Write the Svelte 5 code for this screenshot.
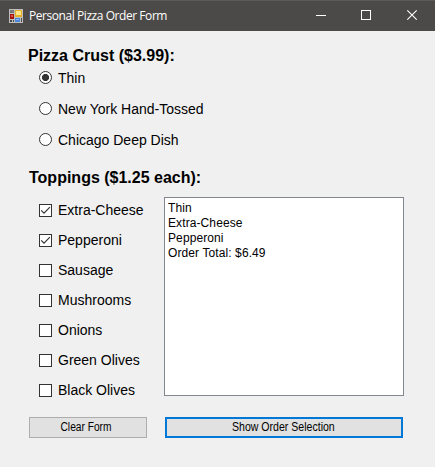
<script>
  const crusts = ['Thin', 'New York Hand-Tossed', 'Chicago Deep Dish'];
  const toppings = ['Extra-Cheese', 'Pepperoni', 'Sausage', 'Mushrooms', 'Onions', 'Green Olives', 'Black Olives'];
  let crust = $state('Thin');
  let chosen = $state(['Extra-Cheese', 'Pepperoni']);
  let lines = $state(['Thin', 'Extra-Cheese', 'Pepperoni', 'Order Total: $6.49']);

  function toggle(name) {
    chosen = chosen.includes(name) ? chosen.filter((t) => t !== name) : [...chosen, name];
  }
  function clearForm() {
    crust = 'Thin';
    chosen = [];
    lines = [];
  }
  function showOrder() {
    const picked = toppings.filter((t) => chosen.includes(t));
    lines = [crust, ...picked, 'Order Total: $' + (3.99 + 1.25 * picked.length).toFixed(2)];
  }
</script>

<div class="window">
  <header>
    <svg class="appicon" width="14" height="14" viewBox="0 0 14 14" shape-rendering="crispEdges">
      <rect width="14" height="14" fill="#bdbdbd" />
      <rect x="1" y="1" width="4" height="3" fill="#77797c" />
      <rect x="1" y="5" width="4" height="5" fill="#a3140f" />
      <rect x="2" y="6" width="2" height="2" fill="#e0523f" />
      <rect x="1" y="11" width="2" height="2" fill="#4c4a48" />
      <rect x="4" y="11" width="1" height="2" fill="#4c4a48" />
      <rect x="6" y="1" width="7" height="7" fill="#e5b02a" />
      <rect x="7" y="2" width="5" height="4" fill="#ffe48a" />
      <rect x="6" y="9" width="5" height="4" fill="#4a86dc" />
      <rect x="7" y="10" width="3" height="1" fill="#8db8f5" />
      <rect x="12" y="9" width="1" height="4" fill="#4c4a48" />
    </svg>
    <span class="title">Personal Pizza Order Form</span>
    <svg class="controls" width="138" height="30" viewBox="0 0 138 30" fill="none" stroke="#fff">
      <path d="M19 14.5h10" />
      <rect x="64.5" y="9.5" width="9" height="9" />
      <path d="M110.3 9.3l9.4 9.4M119.7 9.3l-9.4 9.4" stroke-width="1.1" />
    </svg>
  </header>

  <main>
    <h2 class="crust-head">Pizza Crust ($3.99):</h2>
    <div class="crusts">
      {#each crusts as name}
        <label class="radio">
          <input type="radio" name="crust" value={name} bind:group={crust} />
          <span>{name}</span>
        </label>
      {/each}
    </div>
    <h2 class="top-head">Toppings ($1.25 each):</h2>
    <div class="middle">
      <div class="toppings">
        {#each toppings as name}
          <label class="check">
            <input type="checkbox" checked={chosen.includes(name)} onchange={() => toggle(name)} />
            <svg width="13" height="13" viewBox="0 0 13 13">
              <rect x=".5" y=".5" width="12" height="12" fill="#fff" stroke="#333" />
              {#if chosen.includes(name)}
                <path d="M2.2 6.3L5 9.1l5.9-5.9" fill="none" stroke="#333" stroke-width="1.2" />
              {/if}
            </svg>
            <span>{name}</span>
          </label>
        {/each}
      </div>
      <div class="list">
        {#each lines as line}<div>{line}</div>{/each}
      </div>
    </div>
    <div class="buttons">
      <button class="clear" onclick={clearForm}><span>Clear Form</span></button>
      <button class="show" onclick={showOrder}><span>Show Order Selection</span></button>
    </div>
  </main>
</div>

<style>
  :global(body) { margin: 0; background: #f0f0f0; }
  .window {
    width: 435px; height: 467px; box-sizing: border-box; overflow: hidden;
    background: #f0f0f0; color: #000;
    font-family: "Liberation Sans", Arial, sans-serif;
  }
  header {
    display: flex; align-items: center; height: 31px; box-sizing: border-box;
    border-top: 1px solid #5c5a58; background: #4c4a48; color: #fff; padding-left: 9px;
  }
  .appicon { margin-top: -1px; }
  .title {
    margin-left: 6px; flex: 1; white-space: nowrap;
    font: 12px/16px "Open Sans", "Noto Sans", sans-serif; letter-spacing: -0.44px;
  }
  .controls { flex: none; }
  main { display: flex; flex-direction: column; }
  h2 { margin: 0; font-size: 16px; line-height: 20px; height: 20px; font-weight: bold; white-space: nowrap; }
  .crust-head { padding: 15px 0 0 28px; }
  .top-head { padding: 13px 0 0 29px; }
  .crusts { padding-left: 39px; margin-top: -4px; }
  label { display: flex; align-items: center; font-size: 14px; white-space: nowrap; }
  label span { margin-left: 6px; }
  .radio { height: 31px; }
  .check { height: 30px; position: relative; }
  .radio input {
    appearance: none; width: 13px; height: 13px; margin: 0; box-sizing: border-box;
    border: 1px solid #333; border-radius: 50%; background: #fff;
  }
  .radio input:checked { background: radial-gradient(circle, #333 3.2px, #fff 3.9px); }
  .check input { position: absolute; opacity: 0; margin: 0; }
  .middle { display: flex; padding-top: 9px; }
  .toppings { width: 125px; padding-left: 39px; margin-top: -2px; box-sizing: content-box; }
  .list {
    box-sizing: border-box; width: 240px; height: 199px; border: 1px solid #828790;
    background: #fff; padding: 3px 0 0 3px; font-size: 12px; line-height: 15px; letter-spacing: 0.1px;
  }
  .buttons { display: flex; gap: 18px; padding-left: 29px; margin-top: 12px; }
  button {
    box-sizing: border-box; height: 21px; padding: 0 2px 0 0; border: 1px solid #adadad;
    background: #e1e1e1; color: #000; font: 12px/15px "Liberation Sans", Arial, sans-serif;
    display: flex; align-items: center; justify-content: center; white-space: nowrap;
  }
  button span { transform: scaleX(0.88); }
  .clear { width: 118px; padding-right: 3px; }
  .clear span { transform: scaleX(0.85); }
  .show { width: 238px; border: 2px solid #0078d7; }
</style>
